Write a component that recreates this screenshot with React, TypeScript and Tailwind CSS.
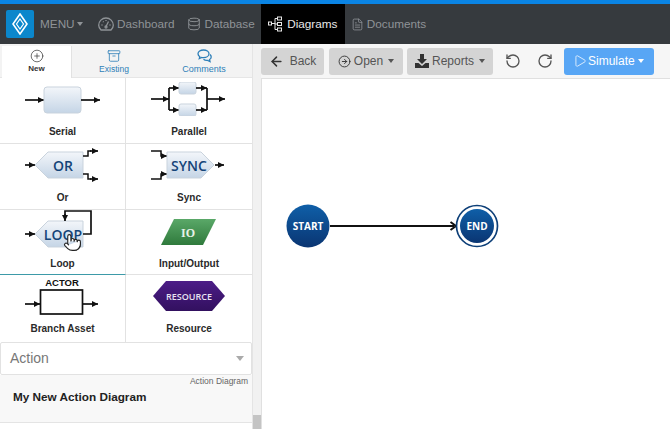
import { ArrowLeft, ArrowRightCircle, RotateCcw, RotateCw, Play, CirclePlus, Archive, Database, FileText, Pointer } from "lucide-react";
import type { ReactNode } from "react";

const FONT = "Arial, 'Liberation Sans', sans-serif";

function Caret() {
  return <span className="ml-[2px] inline-block border-x-[3.5px] border-t-[4px] border-x-transparent border-t-current" />;
}

function Arrow({ x1, y1, x2, y2 }: { x1: number; y1: number; x2: number; y2: number }) {
  const dx = Math.sign(x2 - x1);
  const dy = Math.sign(y2 - y1);
  const p = dx
    ? `${x2},${y2} ${x2 - dx * 6},${y2 - 3} ${x2 - dx * 6},${y2 + 3}`
    : `${x2},${y2} ${x2 - 3},${y2 - dy * 6} ${x2 + 3},${y2 - dy * 6}`;
  return (
    <g>
      <line x1={x1} y1={y1} x2={x2} y2={y2} stroke="#111" strokeWidth="1.7" />
      <polygon points={p} fill="#111" />
    </g>
  );
}

function Defs() {
  return (
    <svg width="0" height="0" className="absolute">
      <defs>
        <linearGradient id="box" x1="0" y1="0" x2="0" y2="1">
          <stop offset="0" stopColor="#f3f6fa" />
          <stop offset="1" stopColor="#c5d5e6" />
        </linearGradient>
        <linearGradient id="green" x1="0" y1="0" x2="0" y2="1">
          <stop offset="0" stopColor="#5aa868" />
          <stop offset="1" stopColor="#2f7a3c" />
        </linearGradient>
        <linearGradient id="purple" x1="0" y1="0" x2="0" y2="1">
          <stop offset="0" stopColor="#4c1d87" />
          <stop offset="1" stopColor="#32105f" />
        </linearGradient>
        <linearGradient id="node" x1="0" y1="0" x2="0" y2="1">
          <stop offset="0" stopColor="#0f5fa8" />
          <stop offset="1" stopColor="#0a3572" />
        </linearGradient>
      </defs>
    </svg>
  );
}

function Serial() {
  return (
    <svg width="76" height="28" viewBox="0 0 76 28">
      <Arrow x1={0} y1={14} x2={19} y2={14} />
      <rect x="19" y="1" width="37" height="26" rx="3" fill="url(#box)" stroke="#c9d3dd" />
      <Arrow x1={56} y1={14} x2={75} y2={14} />
    </svg>
  );
}

function Parallel() {
  return (
    <svg width="76" height="34" viewBox="0 0 76 34">
      <Arrow x1={0} y1={17} x2={18} y2={17} />
      <path d="M18 6V28" stroke="#111" strokeWidth="1.7" />
      <Arrow x1={18} y1={6} x2={28} y2={6} />
      <Arrow x1={18} y1={28} x2={28} y2={28} />
      <rect x="28" y="0" width="17" height="12" rx="2" fill="url(#box)" stroke="#c9d3dd" />
      <rect x="28" y="22" width="17" height="12" rx="2" fill="url(#box)" stroke="#c9d3dd" />
      <Arrow x1={45} y1={6} x2={56} y2={6} />
      <Arrow x1={45} y1={28} x2={56} y2={28} />
      <path d="M56 6V28" stroke="#111" strokeWidth="1.7" />
      <Arrow x1={56} y1={17} x2={74} y2={17} />
    </svg>
  );
}

function Or() {
  return (
    <svg width="76" height="30" viewBox="0 0 76 30" className="overflow-visible">
      <Arrow x1={0} y1={15} x2={10} y2={15} />
      <polygon points="10,15 23,2 58,2 58,28 23,28" fill="url(#box)" stroke="#c9d3dd" />
      <text x="38" y="20.5" textAnchor="middle" fontSize="14" fontWeight="600" fill="#144478" fontFamily="'Open Sans', sans-serif">OR</text>
      <path d="M58 6H63V1H66" fill="none" stroke="#111" strokeWidth="1.5" />
      <Arrow x1={65} y1={1} x2={73} y2={1} />
      <path d="M58 24H63V29H66" fill="none" stroke="#111" strokeWidth="1.5" />
      <Arrow x1={65} y1={29} x2={73} y2={29} />
    </svg>
  );
}

function Sync() {
  return (
    <svg width="76" height="30" viewBox="0 0 76 30" className="overflow-visible">
      <path d="M0 1H10V6H14" fill="none" stroke="#111" strokeWidth="1.5" />
      <Arrow x1={10} y1={6} x2={16} y2={6} />
      <path d="M0 29H10V24H14" fill="none" stroke="#111" strokeWidth="1.5" />
      <Arrow x1={10} y1={24} x2={16} y2={24} />
      <polygon points="16,2 50,2 63,15 50,28 16,28" fill="url(#box)" stroke="#c9d3dd" />
      <text x="38" y="20.5" textAnchor="middle" fontSize="14" fontWeight="600" fill="#144478" fontFamily="'Open Sans', sans-serif">SYNC</text>
      <Arrow x1={64} y1={15} x2={73} y2={15} />
    </svg>
  );
}

function Loop() {
  return (
    <svg width="76" height="40" viewBox="0 0 76 40" className="overflow-visible">
      <Arrow x1={0} y1={24} x2={10} y2={24} />
      <polygon points="10,24 23,11 58,11 58,37 23,37" fill="url(#box)" stroke="#c9d3dd" />
      <text x="38" y="29.5" textAnchor="middle" fontSize="14" fontWeight="600" fill="#144478" fontFamily="'Open Sans', sans-serif">LOOP</text>
      <path d="M58 24H66V1H40V5" fill="none" stroke="#111" strokeWidth="1.7" />
      <Arrow x1={40} y1={4} x2={40} y2={11} />
    </svg>
  );
}

function InputOutput() {
  return (
    <svg width="56" height="26" viewBox="0 0 56 26">
      <polygon points="13,0 55,0 42,26 0,26" fill="url(#green)" />
      <text x="27" y="17.5" textAnchor="middle" fontSize="12" fontWeight="600" fill="#e6f2e6" fontFamily="'Liberation Serif', serif">IO</text>
    </svg>
  );
}

function Actor() {
  return (
    <svg width="76" height="40" viewBox="0 0 76 40">
      <text x="37" y="8" textAnchor="middle" fontSize="9.5" fontWeight="700" fill="#111" fontFamily={FONT}>ACTOR</text>
      <Arrow x1={0} y1={26} x2={15} y2={26} />
      <rect x="15.5" y="12" width="42" height="24" fill="#fff" stroke="#111" strokeWidth="1.7" />
      <Arrow x1={58} y1={26} x2={73} y2={26} />
    </svg>
  );
}

function Resource() {
  return (
    <svg width="72" height="30" viewBox="0 0 72 30">
      <polygon points="0,15 13,0 59,0 72,15 59,30 13,30" fill="url(#purple)" />
      <text x="36" y="18.5" textAnchor="middle" fontSize="9" fontWeight="600" fill="#e9e2f2" fontFamily="'Open Sans', sans-serif">RESOURCE</text>
    </svg>
  );
}

function Cell({ icon, name, className = "", iconClass = "pb-[5px]" }: { icon: ReactNode; name: string; className?: string; iconClass?: string }) {
  return (
    <div className={`flex flex-col items-center ${className}`}>
      <div className={`flex h-[47px] items-center justify-center ${iconClass}`}>{icon}</div>
      <span className="text-[10px] leading-[14px] font-bold text-[#2a2a2a]">{name}</span>
    </div>
  );
}

function NavItem({ icon, text }: { icon: ReactNode; text: string }) {
  return (
    <div className="flex items-center gap-[3px] text-[11.75px] text-[#8f9397]">
      {icon}
      <span>{text}</span>
    </div>
  );
}

function ToolButton({ children, className = "" }: { children: ReactNode; className?: string }) {
  return (
    <div className={`flex h-[27px] items-center rounded-[3px] bg-[#d4d4d4] text-[12px] text-[#555] ${className}`}>
      {children}
    </div>
  );
}

export default function App() {
  return (
    <div className="flex h-[429px] w-[670px] flex-col overflow-hidden bg-white" style={{ fontFamily: FONT }}>
      <Defs />
      <div className="h-[4px] bg-[#0a84e4]" />
      <nav className="flex h-[40px] items-stretch bg-[#363a3e]">
        <div className="ml-[6px] mt-[6px] flex h-[28px] w-[28px] items-center justify-center rounded-[2px] bg-[#0b87cc]">
          <svg width="16" height="22" viewBox="0 0 16 22" fill="none" stroke="#fff" strokeWidth="1.6">
            <path d="M8 1L15 11L8 21L1 11Z" />
            <path d="M8 6L11.5 11L8 16L4.5 11Z" strokeWidth="1.2" />
          </svg>
        </div>
        <div className="ml-[6px] flex w-[58px] items-center text-[11.75px] text-[#8f9397]">
          MENU
          <Caret />
        </div>
        <div className="flex items-center gap-[13px]">
          <NavItem
            icon={
              <svg width="16" height="14" viewBox="0 0 16 14" fill="none" stroke="currentColor" strokeWidth="1.3">
                <path d="M3 13H13C14.5 11.5 15.3 10 15.3 8.3A7.3 7.3 0 0 0 0.7 8.3C0.7 10 1.5 11.5 3 13Z" />
                <path d="M8 9.5L10.5 4.5M3.5 8H4.5M11.5 8H12.5M5 4.5L5.6 5.2M8 3V4" />
                <circle cx="8" cy="10" r="1" />
              </svg>
            }
            text="Dashboard"
          />
          <NavItem icon={<Database size={14} strokeWidth={1.6} />} text="Database" />
        </div>
        <div className="ml-[6px] flex w-[84px] items-center justify-center gap-[4px] bg-black text-[11.75px] text-[#e8e8e8]">
          <svg width="15" height="16" viewBox="0 0 15 16" fill="none" stroke="#e8e8e8" strokeWidth="1">
            <rect x="0.5" y="6" width="3" height="3" />
            <rect x="9.5" y="1" width="4" height="3" />
            <rect x="9.5" y="6.5" width="4" height="3" />
            <rect x="9.5" y="12" width="4" height="3" />
            <path d="M3.5 7.5H7M7 2.5V13.5M7 2.5H9.5M7 8H9.5M7 13.5H9.5" />
          </svg>
          Diagrams
        </div>
        <div className="ml-[6px] flex items-center">
          <NavItem icon={<FileText size={13} strokeWidth={1.5} />} text="Documents" />
        </div>
      </nav>

      <div className="flex min-h-0 flex-1">
        <aside className="flex w-[253px] flex-col border-r border-[#e4e4e4]">
          <div className="flex h-[34px] border-b border-[#e6e6e6] bg-[#f3f3f3] pt-[2px] pl-[2px]">
            <div className="flex h-[32px] w-[70px] flex-col items-center border-r border-[#e2e2e2] bg-white pt-[3px] text-[#333]">
              <CirclePlus size={14} strokeWidth={1.2} />
              <span className="text-[8px] leading-[12px] font-bold">New</span>
            </div>
            <div className="flex w-[84px] flex-col items-center pt-[3px] text-[#2e7fb8]">
              <Archive size={14} strokeWidth={1.4} />
              <span className="text-[8.5px] leading-[12px]">Existing</span>
            </div>
            <div className="flex w-[96px] flex-col items-center pt-[3px] text-[#2e7fb8]">
              <svg width="15" height="14" viewBox="0 0 15 14" fill="none" stroke="currentColor" strokeWidth="1.3">
                <path d="M6.5 1C3.5 1 1 2.6 1 4.8C1 6 1.7 7 2.8 7.7L2.3 9.6L4.8 8.5C5.4 8.6 5.9 8.7 6.5 8.7C9.5 8.7 12 7 12 4.8C12 2.6 9.5 1 6.5 1Z" />
                <path d="M13 5.5C13.8 6.2 14.2 7 14.2 7.9C14.2 9 13.5 10 12.5 10.5L13 12.5L10.6 11.4C9 11.6 7.5 11.2 6.5 10.3" />
              </svg>
              <span className="text-[9px] leading-[12px]">Comments</span>
            </div>
          </div>
          <div className="grid grid-cols-[126px_126px] grid-rows-[66px_66px_65px_67px]">
            <Cell icon={<Serial />} name="Serial" iconClass="pb-[3px]" className="border-r border-b border-[#e2e2e2]" />
            <Cell icon={<Parallel />} name="Parallel" className="border-b border-[#e2e2e2]" />
            <Cell icon={<Or />} name="Or" className="border-r border-b border-[#e2e2e2]" />
            <Cell icon={<Sync />} name="Sync" className="border-b border-[#e2e2e2]" />
            <div className="relative">
              <Cell icon={<Loop />} name="Loop" iconClass="pb-[7px]" className="h-full border-r border-b border-r-[#e2e2e2] border-b-[#3d9aa8]" />
              <Pointer size={19} strokeWidth={1.4} fill="#fff" className="absolute top-[23px] left-[63px] text-[#222]" />
            </div>
            <Cell icon={<InputOutput />} name="Input/Output" iconClass="pb-[3px]" className="border-b border-[#e2e2e2]" />
            <Cell icon={<Actor />} name="Branch Asset" iconClass="pb-[1px]" className="border-r border-[#e2e2e2]" />
            <Cell icon={<Resource />} name="Resource" />
          </div>
          <div className="flex h-[33px] shrink-0 items-center justify-between rounded-[2px] border border-[#e2e2e2] bg-white pr-[7px] pl-[9px] text-[14px] text-[#777]">
            Action
            <span className="inline-block border-x-[4px] border-t-[5px] border-x-transparent border-t-[#aaa]" />
          </div>
          <div className="h-[48px] border-b border-[#e4e4e4] bg-[#f8f8f8] px-[4px]">
            <div className="text-right text-[8.5px] leading-[12px] text-[#666]">Action Diagram</div>
            <div className="pt-[1px] pl-[9px] text-[11.75px] leading-[18px] font-bold text-[#222]">My New Action Diagram</div>
          </div>
        </aside>
        <div className="flex w-[8px] flex-col justify-end bg-[#f1f1f1]">
          <div className="h-[14px] bg-[#c4c4c4]" />
        </div>
        <main className="flex min-w-0 flex-1 flex-col bg-[#f6f6f6]">
          <div className="flex h-[34px] items-center">
            <ToolButton className="w-[63px] justify-center gap-[6px]">
              <ArrowLeft size={15} strokeWidth={2.4} className="text-[#333]" />
              Back
            </ToolButton>
            <ToolButton className="ml-[5px] w-[74px] justify-center gap-[3px]">
              <ArrowRightCircle size={13} strokeWidth={1.7} className="text-[#333]" />
              <span>Open</span>
              <Caret />
            </ToolButton>
            <ToolButton className="ml-[4px] w-[86px] justify-center gap-[3px]">
              <svg width="14" height="14" viewBox="0 0 14 14" fill="#333">
                <path d="M5 0H9V5H12L7 10L2 5H5Z" />
                <path d="M0 9H3.5L7 12L10.5 9H14V14H0Z" />
              </svg>
              <span>Reports</span>
              <Caret />
            </ToolButton>
            <RotateCcw size={16} strokeWidth={2} className="ml-[12px] text-[#555]" />
            <RotateCw size={16} strokeWidth={2} className="ml-[16px] text-[#555]" />
            <div className="ml-[11px] flex h-[27px] w-[90px] items-center gap-[1px] rounded-[3px] bg-[#58a6f5] pl-[9px] text-[12px] text-white">
              <Play size={14} strokeWidth={1.3} />
              Simulate
              <Caret />
            </div>
          </div>
          <div className="relative flex-1 border-t border-l border-[#e0e0e0] bg-white">
            <svg className="absolute top-[142px] left-[68px]" width="130" height="10" viewBox="0 0 130 10">
              <line x1="0" y1="5" x2="124" y2="5" stroke="#111" strokeWidth="2" />
              <path d="M120.5 1L126 5L120.5 9" fill="none" stroke="#111" strokeWidth="2" />
            </svg>
            <svg className="absolute top-[125px] left-[24px]" width="44" height="44" viewBox="0 0 44 44">
              <circle cx="22" cy="22" r="21.5" fill="url(#node)" />
              <text x="22" y="25.5" textAnchor="middle" fontSize="10" fontWeight="700" fill="#fff" fontFamily="'Open Sans', sans-serif">START</text>
            </svg>
            <svg className="absolute top-[125px] left-[193px]" width="44" height="44" viewBox="0 0 44 44">
              <circle cx="22" cy="22" r="20.5" fill="#fff" stroke="#0d3f78" strokeWidth="1.7" />
              <circle cx="22" cy="22" r="17" fill="url(#node)" />
              <text x="22" y="25.5" textAnchor="middle" fontSize="10" fontWeight="700" fill="#fff" fontFamily="'Open Sans', sans-serif">END</text>
            </svg>
          </div>
        </main>
      </div>
    </div>
  );
}
